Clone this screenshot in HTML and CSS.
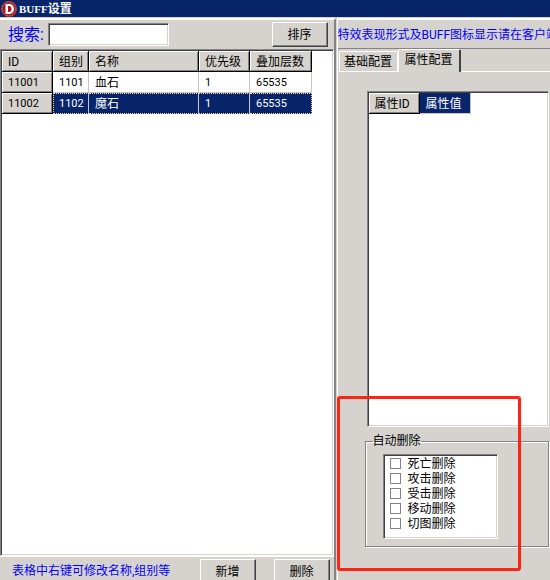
FILE: index.html
```
<!DOCTYPE html>
<html lang="zh-CN">
<head>
<meta charset="utf-8">
<title>BUFF设置</title>
<link rel="stylesheet" href="styles.css">
</head>
<body>
<header class="titlebar">
  <svg class="logo" viewBox="0 0 16 16" aria-hidden="true">
    <circle cx="8" cy="8" r="8" fill="#8e2a32"/>
    <circle cx="8" cy="8" r="7" fill="none" stroke="#d86a68" stroke-dasharray="2 1"/>
    <circle cx="8" cy="8" r="6" fill="#b3141c"/>
    <path d="M4.500 3h4a4.500 5 0 0 1 0 10h-4zM7 5v6h1a2.500 3 0 0 0 0-6z" fill="#fff" fill-rule="evenodd"/>
  </svg>
  <h1 class="title"><span class="title-latin">BUFF</span>设置</h1>
</header>
<div class="window">
  <section class="left">
    <div class="toolbar">
      <label class="search-label" for="search">搜索:</label>
      <input class="search" id="search" type="text">
      <button class="button sort" type="button">排序</button>
    </div>
    <div class="grid-box">
      <table class="grid">
        <colgroup><col class="c-id"><col class="c-group"><col class="c-name"><col class="c-level"><col class="c-stack"></colgroup>
        <thead>
          <tr><th>ID</th><th>组别</th><th>名称</th><th>优先级</th><th>叠加层数</th></tr>
        </thead>
        <tbody>
          <tr><th>11001</th><td>1101</td><td>血石</td><td>1</td><td>65535</td></tr>
          <tr class="selected"><th>11002</th><td>1102</td><td>魔石</td><td>1</td><td>65535</td></tr>
        </tbody>
      </table>
    </div>
    <footer class="footer">
      <span class="hint">表格中右键可修改名称,组别等</span>
      <button class="button add" type="button">新增</button>
      <button class="button" type="button">删除</button>
    </footer>
  </section>
  <section class="right">
    <p class="notice">特效表现形式及BUFF图标显示请在客户端</p>
    <div class="tabs" role="tablist">
      <button class="tab" type="button" role="tab" aria-selected="false">基础配置</button>
      <button class="tab active" type="button" role="tab" aria-selected="true">属性配置</button>
    </div>
    <div class="page">
      <div class="attr-box">
        <table class="grid attrs">
          <colgroup><col class="c-id"><col class="c-id"></colgroup>
          <thead><tr><th>属性ID</th><th class="current">属性值</th></tr></thead>
        </table>
      </div>
      <fieldset class="group">
        <legend>自动删除</legend>
        <div class="checks">
          <label><input type="checkbox">死亡删除</label>
          <label><input type="checkbox">攻击删除</label>
          <label><input type="checkbox">受击删除</label>
          <label><input type="checkbox">移动删除</label>
          <label><input type="checkbox">切图删除</label>
        </div>
      </fieldset>
    </div>
    <div class="highlight"></div>
  </section>
</div>
</body>
</html>
```
FILE: styles.css
```
:root {
  --face: #d6d3ce;
  --shade: #848284;
  --dark: #424142;
  --navy: #08246b;
}

* { box-sizing: border-box; }

body {
  margin: 0;
  height: 100vh;
  display: flex;
  flex-direction: column;
  overflow: hidden;
  background: var(--face);
  color: #000;
  font: 12px/16px Roboto, "Noto Sans CJK SC", sans-serif;
}

button, input { font: inherit; color: inherit; }

.titlebar {
  flex: none;
  height: 17px;
  display: flex;
  align-items: center;
  gap: 2px;
  padding-left: 1px;
  background: var(--navy);
  color: #fff;
}

.logo { width: 16px; height: 16px; }

.title {
  margin: 0;
  font: bold 12px/16px "Noto Sans CJK SC", sans-serif;
}

.title-latin { font: bold 11px/16px "Liberation Serif", serif; }

.window {
  flex: 1;
  min-height: 0;
  display: flex;
  border-top: 1px solid var(--face);
}

.left {
  flex: none;
  width: 61%;
  display: flex;
  flex-direction: column;
  border-top: 2px solid #fff;
  border-right: 2px solid var(--shade);
}

.toolbar {
  flex: none;
  height: 29px;
  display: flex;
  align-items: center;
  padding: 0 6px 0 8px;
}

.search-label {
  width: 40px;
  color: #00f;
  font-size: 16px;
  line-height: 24px;
}

.search {
  width: 121px;
  height: 23px;
  padding: 0 4px;
  background: #fff;
  border: 1px solid;
  border-color: var(--shade) #fff #fff var(--shade);
  box-shadow: inset 1px 1px var(--dark), inset -1px -1px var(--face);
}

.button {
  flex: none;
  width: 56px;
  height: 25px;
  padding: 0;
  background: var(--face);
  border: 1px solid;
  border-color: #fff var(--dark) var(--dark) #fff;
  box-shadow: inset -1px -1px var(--shade);
}

.sort { margin-left: auto; }

.grid-box {
  flex: 1;
  min-height: 0;
  background: #fff;
  border: 1px solid;
  border-color: var(--shade) #fff #fff var(--shade);
  box-shadow: inset 1px 1px var(--dark), inset -1px -1px var(--face);
  padding: 1px;
}

.grid {
  width: 310px;
  table-layout: fixed;
  border-spacing: 0;
}

.c-id, .c-level { width: 51px; }
.c-group { width: 36px; }
.c-name { width: 110px; }
.c-stack { width: 62px; }

.grid th, .grid td {
  height: 21px;
  padding: 1px 0 0 6px;
  font-weight: normal;
  line-height: 16px;
  text-align: left;
  white-space: nowrap;
  border: 0 solid #c6c3c6;
  border-width: 0 1px 1px 0;
}

.grid th {
  background: var(--face);
  border-color: #000;
  box-shadow: inset 1px 1px #fff, inset -1px -1px var(--shade);
}

.grid tbody { font-size: 11px; }
.grid td:nth-child(3) { font-size: 12px; }

.grid .selected td {
  padding-top: 0;
  background: var(--navy);
  color: #fff;
  border-top: 1px dotted #f7db9c;
  border-bottom: 1px dotted #f7db9c;
}

.grid .selected td:nth-child(2) { border-left: 1px dotted #f7db9c; padding-left: 5px; }
.grid .selected td:last-child { border-right: 1px dotted #f7db9c; }

.footer {
  flex: none;
  height: 24px;
  display: flex;
  align-items: flex-start;
  padding: 2px 4px 0 12px;
  border-top: 1px solid #fff;
}

.hint { color: #00f; line-height: 24px; }
.add { margin: 0 18px 0 auto; }

.right {
  position: relative;
  flex: 1;
  min-width: 0;
  display: flex;
  flex-direction: column;
  margin-left: 1px;
  border-top: 2px solid #fff;
  border-left: 1px solid #fff;
}

.notice {
  flex: none;
  margin: 0;
  height: 29px;
  overflow: hidden;
  white-space: nowrap;
  color: #00f;
  line-height: 30px;
  border-bottom: 1px solid var(--shade);
}

.tabs {
  flex: none;
  height: 23px;
  display: flex;
  align-items: flex-end;
  padding-left: 1px;
  box-shadow: inset 0 -1px #fff;
}

.tab {
  width: 59px;
  height: 21px;
  padding: 1px 0 0;
  background: var(--face);
  border: 1px solid #fff;
  border-radius: 2px 2px 0 0;
}

.tab.active {
  width: 63px;
  height: 23px;
  padding: 0 0 2px;
  border-width: 1px 2px 0 1px;
  border-right-color: var(--dark);
}

.page {
  flex: none;
  padding: 19px 1px 0 27px;
}

.attr-box {
  height: 336px;
  margin-left: 2px;
  padding: 1px;
  background: #fff;
  border: 1px solid;
  border-color: var(--shade) #fff #fff var(--shade);
  box-shadow: inset 1px 1px var(--dark), inset -1px -1px var(--face);
}

.attrs { width: 102px; }

.grid .current {
  background: var(--navy);
  color: #fff;
  border-color: #c6c3c6;
  box-shadow: none;
}

.group {
  min-width: 0;
  margin: 6px 0 0;
  padding: 5px 16px 7px;
  border: 1px solid var(--shade);
  box-shadow: inset 1px 1px #fff, 1px 1px #fff;
}

.group legend {
  margin-left: -9px;
  padding: 0;
  line-height: 16px;
}

.checks {
  width: 115px;
  height: 85px;
  margin-left: 1px;
  padding: 1px 6px;
  background: #fff;
  border: 1px solid;
  border-color: var(--shade) #fff #fff var(--shade);
  box-shadow: inset 1px 1px var(--dark), inset -1px -1px var(--face);
}

.checks label {
  height: 15px;
  display: flex;
  align-items: center;
  gap: 7px;
}

.checks input {
  appearance: none;
  width: 11px;
  height: 11px;
  margin: 0;
  background: #fff;
  border: 1px solid var(--shade);
}

.checks input:checked { background: var(--navy); }

.highlight {
  position: absolute;
  top: 376px;
  left: -1px;
  width: 184px;
  height: 175px;
  border: 3px solid #ff2314;
  border-radius: 3px;
  pointer-events: none;
}
```
